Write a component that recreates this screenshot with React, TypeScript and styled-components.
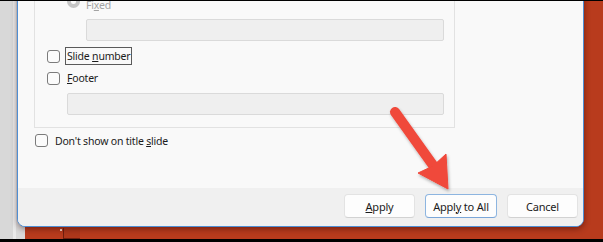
import React from "react";
import styled, { createGlobalStyle } from "styled-components";

const Global = createGlobalStyle`
  html, body { margin: 0; padding: 0; background: #000; }
  body { width: 603px; height: 242px; overflow: hidden; }
  * { box-sizing: border-box; }
`;

const FONT = `"Noto Sans", "Open Sans", "DejaVu Sans", sans-serif`;

const Frame = styled.div`
  width: 603px;
  height: 242px;
  background: #000;
  padding: 1px 0 3px 0;
`;

const Scene = styled.div`
  position: relative;
  height: 238px;
  display: flex;
  overflow: hidden;
`;

const LeftPane = styled.div`
  width: 25px;
  flex: none;
  background: linear-gradient(to right, #d8d8d8 0 13px, #eaeaea 13px 16px, #dadada 16px);
`;

const SlideArea = styled.div`
  flex: 1;
  background: #b83b1d;
  display: flex;
  align-items: flex-end;
  padding-left: 35px;
`;

const Dot = styled.div`
  width: 2px;
  height: 2px;
  background: #f3d6cc;
  margin-bottom: 8px;
`;

const Thumb = styled.div`
  width: 17px;
  height: 11px;
  margin-left: 1px;
  border-left: 1px solid #6e1f0f;
  border-bottom: 1px solid #6e1f0f;
  background: #ad371b;
`;

const Dialog = styled.div`
  position: absolute;
  left: 17px;
  bottom: 12px;
  width: 567px;
  height: 300px;
  border: 1px solid #4f8ed3;
  border-radius: 8px;
  background: #f9f9f9;
  display: flex;
  flex-direction: column;
  overflow: hidden;
  box-shadow: 0 2px 6px rgba(40, 0, 0, 0.45);
  font-family: ${FONT};
  font-size: 10.5px;
  letter-spacing: -0.2px;
  color: #1b1b1b;
`;

const Body = styled.div`
  flex: 1;
  display: flex;
  flex-direction: column;
  justify-content: flex-end;
  padding: 0 0 39px 16px;
`;

const Panel = styled.div`
  width: 421px;
  border: 1px solid #e2e2e2;
  border-top: none;
  padding: 0 10px 12px 12px;
  display: flex;
  flex-direction: column;
`;

const RadioRow = styled.div`
  height: 16px;
  margin-left: 20px;
  display: flex;
  align-items: flex-start;
  gap: 6px;
  color: #a3a3a3;
`;

const RadioText = styled.span`
  line-height: 16px;
  padding-top: 2px;
`;

const Radio = styled.span`
  width: 13px;
  height: 13px;
  border-radius: 50%;
  background: #c5c5c5;
  display: flex;
  align-items: center;
  justify-content: center;
  &::after {
    content: "";
    width: 5px;
    height: 5px;
    border-radius: 50%;
    background: #fbfbfb;
  }
`;

const TextBox = styled.div<{ $indent: number; $gap: number }>`
  height: 22px;
  margin-left: ${(p) => p.$indent}px;
  margin-top: ${(p) => p.$gap}px;
  background: #efefef;
  border: 1px solid #dadada;
  border-radius: 2px;
`;

const CheckRow = styled.div<{ $gap: number }>`
  height: 18px;
  margin-top: ${(p) => p.$gap}px;
  display: flex;
  align-items: center;
  gap: 5px;
`;

const Box = styled.span`
  width: 13px;
  height: 13px;
  flex: none;
  border: 1px solid #7b7b7b;
  border-radius: 3px;
  background: #fbfbfb;
`;

const Label = styled.span<{ $focus?: boolean }>`
  height: 18px;
  line-height: 16px;
  padding: 0 1px;
  border: 1px solid ${(p) => (p.$focus ? "#5a5a5a" : "transparent")};
  white-space: nowrap;
`;

const OuterRow = styled(CheckRow)`
  height: 17px;
  padding-left: 1px;
`;

const Footer = styled.div`
  height: 38px;
  flex: none;
  background: #f0f0f0;
  display: flex;
  justify-content: flex-end;
  align-items: flex-start;
  gap: 10px;
  padding: 6px 5px 0 0;
`;

const Button = styled.div<{ $default?: boolean; $w: number }>`
  width: ${(p) => p.$w}px;
  height: 24px;
  display: flex;
  align-items: center;
  justify-content: center;
  background: #fdfdfd;
  border: 1px solid ${(p) => (p.$default ? "#8db5e0" : "#e3e3e3")};
  border-bottom-color: ${(p) => (p.$default ? "#7aa6d8" : "#d2d2d2")};
  border-radius: 4px;
  font-size: 11px;
  white-space: nowrap;
`;

const ArrowLayer = styled.svg`
  position: absolute;
  left: 0;
  top: -1px;
  width: 603px;
  height: 242px;
  pointer-events: none;
`;

export default function App() {
  return (
    <Frame>
      <Global />
      <Scene>
        <LeftPane />
        <SlideArea>
          <Dot />
          <Thumb />
        </SlideArea>
        <Dialog>
          <Body>
            <Panel>
              <RadioRow>
                <Radio />
                <RadioText>
                  Fi<u>x</u>ed
                </RadioText>
              </RadioRow>
              <TextBox $indent={39} $gap={8} />
              <CheckRow $gap={6}>
                <Box />
                <Label $focus>
                  Slide <u>n</u>umber
                </Label>
              </CheckRow>
              <CheckRow $gap={4}>
                <Box />
                <Label>
                  <u>F</u>ooter
                </Label>
              </CheckRow>
              <TextBox $indent={20} $gap={6} />
            </Panel>
            <OuterRow $gap={4}>
              <Box />
              <Label>
                Don't show on title <u>s</u>lide
              </Label>
            </OuterRow>
          </Body>
          <Footer>
            <Button $w={71}>
              <span>
                <u>A</u>pply
              </span>
            </Button>
            <Button $w={72} $default>
              <span>
                Appl<u>y</u> to All
              </span>
            </Button>
            <Button $w={71}>Cancel</Button>
          </Footer>
        </Dialog>
        <ArrowLayer viewBox="0 0 603 242">
          <defs>
            <filter id="sh" x="-20%" y="-20%" width="140%" height="140%">
              <feDropShadow dx="1" dy="2" stdDeviation="1.6" floodColor="#000" floodOpacity="0.3" />
            </filter>
          </defs>
          <g filter="url(#sh)" fill="#f0483a" stroke="#f0483a">
            <line x1="395" y1="112" x2="435" y2="168" strokeWidth="10" strokeLinecap="round" />
            <polygon points="448,189 418,173 433,166 446,154" strokeWidth="1" strokeLinejoin="round" />
          </g>
        </ArrowLayer>
      </Scene>
    </Frame>
  );
}
